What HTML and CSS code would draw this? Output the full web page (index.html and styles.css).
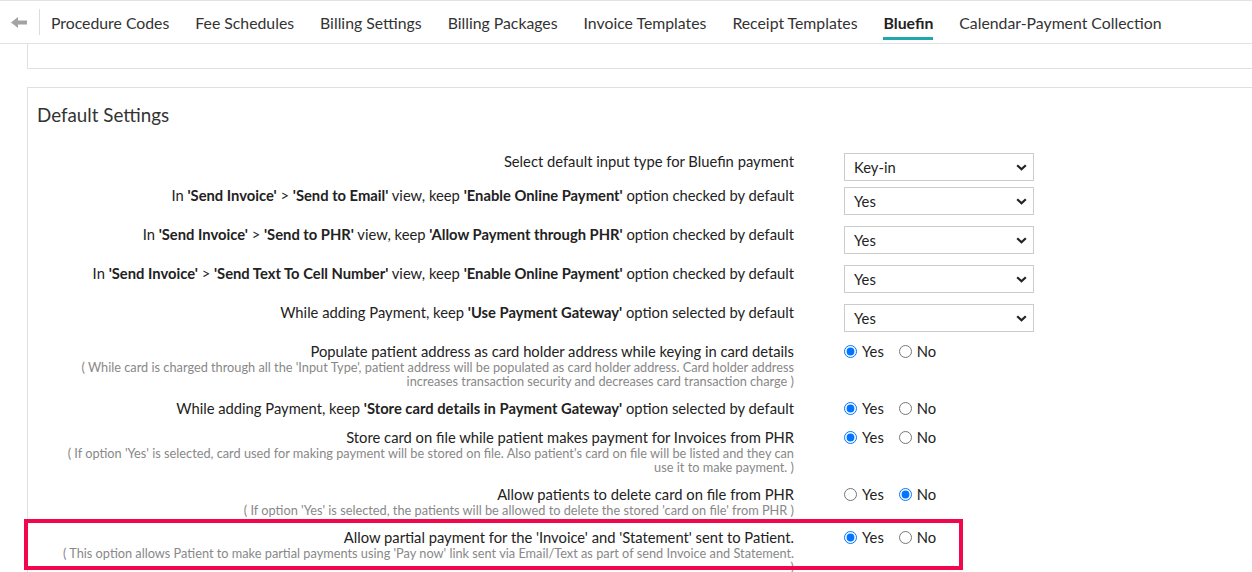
FILE: index.html
```html
<!DOCTYPE html>
<html lang="en">
<head>
<meta charset="utf-8">
<title>Bluefin Settings</title>
<link rel="stylesheet" href="styles.css">
</head>
<body>
<nav class="tabs">
  <div class="back">
    <svg width="16" height="11" viewBox="0 0 16 11" aria-hidden="true"><polygon points="0,5.5 7,0 7,3.5 16,3.5 16,7.5 7,7.5 7,11" fill="#a3a3a3"/></svg>
  </div>
  <ul class="tab-list">
    <li class="tab">Procedure Codes</li>
    <li class="tab">Fee Schedules</li>
    <li class="tab">Billing Settings</li>
    <li class="tab">Billing Packages</li>
    <li class="tab">Invoice Templates</li>
    <li class="tab">Receipt Templates</li>
    <li class="tab active">Bluefin</li>
    <li class="tab">Calendar-Payment Collection</li>
  </ul>
</nav>

<main class="content">
  <section class="panel panel-top"></section>

  <section class="panel panel-main">
    <h2 class="panel-title">Default Settings</h2>

    <div class="row row-sel row-first">
      <div class="label"><p class="main">Select default input type for Bluefin payment</p></div>
      <div class="select"><span>Key-in</span><svg width="11" height="7" viewBox="0 0 11 7"><polyline points="1.2,1.2 5.5,5.3 9.8,1.2" fill="none" stroke="#222" stroke-width="2.2"/></svg></div>
    </div>

    <div class="row row-sel">
      <div class="label"><p class="main">In <b>'Send Invoice'</b> &gt; <b>'Send to Email'</b> view, keep <b>'Enable Online Payment'</b> option checked by default</p></div>
      <div class="select"><span>Yes</span><svg width="11" height="7" viewBox="0 0 11 7"><polyline points="1.2,1.2 5.5,5.3 9.8,1.2" fill="none" stroke="#222" stroke-width="2.2"/></svg></div>
    </div>

    <div class="row row-sel">
      <div class="label"><p class="main">In <b>'Send Invoice'</b> &gt; <b>'Send to PHR'</b> view, keep <b>'Allow Payment through PHR'</b> option checked by default</p></div>
      <div class="select"><span>Yes</span><svg width="11" height="7" viewBox="0 0 11 7"><polyline points="1.2,1.2 5.5,5.3 9.8,1.2" fill="none" stroke="#222" stroke-width="2.2"/></svg></div>
    </div>

    <div class="row row-sel">
      <div class="label"><p class="main">In <b>'Send Invoice'</b> &gt; <b>'Send Text To Cell Number'</b> view, keep <b>'Enable Online Payment'</b> option checked by default</p></div>
      <div class="select"><span>Yes</span><svg width="11" height="7" viewBox="0 0 11 7"><polyline points="1.2,1.2 5.5,5.3 9.8,1.2" fill="none" stroke="#222" stroke-width="2.2"/></svg></div>
    </div>

    <div class="row row-sel">
      <div class="label"><p class="main">While adding Payment, keep <b>'Use Payment Gateway'</b> option selected by default</p></div>
      <div class="select"><span>Yes</span><svg width="11" height="7" viewBox="0 0 11 7"><polyline points="1.2,1.2 5.5,5.3 9.8,1.2" fill="none" stroke="#222" stroke-width="2.2"/></svg></div>
    </div>

    <div class="row">
      <div class="label">
        <p class="main">Populate patient address as card holder address while keying in card details</p>
        <p class="desc">( While card is charged through all the 'Input Type', patient address will be populated as card holder address. Card holder address<br>increases transaction security and decreases card transaction charge )</p>
      </div>
      <div class="radios">
        <label class="radio"><input type="radio" name="r1" checked><span>Yes</span></label>
        <label class="radio"><input type="radio" name="r1"><span>No</span></label>
      </div>
    </div>

    <div class="row">
      <div class="label"><p class="main">While adding Payment, keep <b>'Store card details in Payment Gateway'</b> option selected by default</p></div>
      <div class="radios">
        <label class="radio"><input type="radio" name="r2" checked><span>Yes</span></label>
        <label class="radio"><input type="radio" name="r2"><span>No</span></label>
      </div>
    </div>

    <div class="row">
      <div class="label">
        <p class="main">Store card on file while patient makes payment for Invoices from PHR</p>
        <p class="desc">( If option 'Yes' is selected, card used for making payment will be stored on file. Also patient's card on file will be listed and they can<br>use it to make payment. )</p>
      </div>
      <div class="radios">
        <label class="radio"><input type="radio" name="r3" checked><span>Yes</span></label>
        <label class="radio"><input type="radio" name="r3"><span>No</span></label>
      </div>
    </div>

    <div class="row">
      <div class="label">
        <p class="main">Allow patients to delete card on file from PHR</p>
        <p class="desc">( If option 'Yes' is selected, the patients will be allowed to delete the stored 'card on file' from PHR )</p>
      </div>
      <div class="radios">
        <label class="radio"><input type="radio" name="r4"><span>Yes</span></label>
        <label class="radio"><input type="radio" name="r4" checked><span>No</span></label>
      </div>
    </div>

    <div class="row row-highlight">
      <div class="label">
        <p class="main">Allow partial payment for the 'Invoice' and 'Statement' sent to Patient.</p>
        <p class="desc">( This option allows Patient to make partial payments using 'Pay now' link sent via Email/Text as part of send Invoice and Statement.<br>)</p>
      </div>
      <div class="radios">
        <label class="radio"><input type="radio" name="r5" checked><span>Yes</span></label>
        <label class="radio"><input type="radio" name="r5"><span>No</span></label>
      </div>
      <div class="highlight-box"></div>
    </div>
  </section>
</main>
</body>
</html>
```

FILE: styles.css
```css
html, body {
  margin: 0;
  padding: 0;
  background: #fff;
  overflow: hidden;
}

body {
  font-family: Lato, "Open Sans", "Liberation Sans", sans-serif;
  color: #222;
}

.tabs {
  display: flex;
  align-items: center;
  height: 42px;
  border-top: 1px solid #e2e2e2;
  border-bottom: 1px solid #e2e2e2;
}

.back {
  display: flex;
  align-items: center;
  height: 26px;
  padding: 0 12px 0 11px;
  border-right: 1px solid #dcdcdc;
}

.back svg {
  display: block;
}

.tab-list {
  display: flex;
  gap: 26px;
  margin: 0;
  padding: 0 0 0 11px;
  list-style: none;
  height: 42px;
}

.tab {
  position: relative;
  display: flex;
  align-items: center;
  font-size: 15.8px;
  color: #333;
  padding-top: 1px;
}

.tab.active {
  font-weight: 700;
  color: #222;
}

.tab.active::after {
  content: "";
  position: absolute;
  left: 0;
  right: 0;
  bottom: 3px;
  height: 3px;
  background: #1fa7ab;
}

.content {
  padding-left: 27px;
}

.panel {
  border-left: 1px solid #e0e0e0;
  margin-right: -20px;
}

.panel-top {
  height: 24px;
  border-bottom: 1px solid #e0e0e0;
  margin-bottom: 18px;
}

.panel-main {
  border-top: 1px solid #e0e0e0;
  padding: 16px 0 0 9px;
}

.panel-title {
  margin: 0 0 26px 0;
  font-size: 18.8px;
  line-height: 22px;
  font-weight: 400;
  color: #333;
}

.row {
  position: relative;
  display: grid;
  grid-template-columns: 757px 190px;
  column-gap: 50px;
  align-items: start;
  margin-bottom: 11px;
}

.row.row-sel {
  margin-bottom: 10px;
}

.row.row-first {
  margin-bottom: 5px;
}

.label {
  text-align: right;
}

.main {
  margin: 0;
  font-size: 14.75px;
  line-height: 18px;
  color: #222;
}

.main b {
  font-weight: 700;
}

.desc {
  margin: 0;
  font-size: 12.75px;
  line-height: 14px;
  color: #888;
}

.select {
  box-sizing: border-box;
  height: 28px;
  margin-top: 1px;
  border: 1px solid #cccccc;
  background: #fff;
  display: flex;
  align-items: center;
  justify-content: space-between;
  padding: 0 6px 0 9px;
  font-size: 14.75px;
  color: #222;
}

.select svg {
  display: block;
}

.radios {
  display: flex;
  align-items: center;
  height: 18px;
  gap: 15px;
}

.radio {
  display: flex;
  align-items: center;
  gap: 5px;
  font-size: 14.75px;
  color: #222;
}

.radio input {
  margin: 0;
  width: 13px;
  height: 13px;
}

.highlight-box {
  position: absolute;
  top: -9px;
  left: -13px;
  width: 939px;
  height: 51px;
  box-sizing: border-box;
  border: 4px solid #f2074c;
  pointer-events: none;
}
```
